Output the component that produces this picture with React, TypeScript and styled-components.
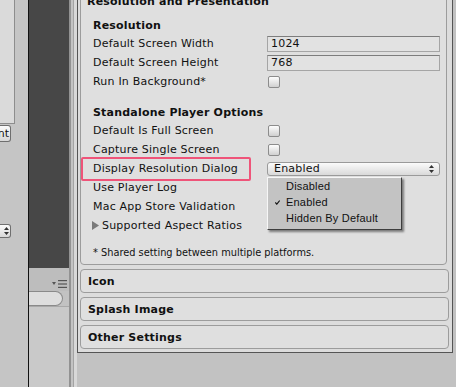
import React from 'react';
import styled, { createGlobalStyle } from 'styled-components';

const GlobalStyle = createGlobalStyle`
  html, body {
    margin: 0;
    padding: 0;
    background: #c2c2c2;
  }
  body {
    font-family: "DejaVu Sans", Verdana, sans-serif;
    font-size: 11px;
    letter-spacing: 0.2px;
    color: #111;
  }
`;

const Screen = styled.div`
  display: flex;
  width: 456px;
  height: 387px;
  overflow: hidden;
  background: #c2c2c2;
`;

// left-most strip (another window, clipped)
const LeftPane = styled.div`
  width: 28px;
  flex-shrink: 0;
  display: flex;
  flex-direction: column;
  background: #c5c5c5;
  border-right: 1px solid #111;
`;

const LeftBox = styled.div`
  width: 15px;
  height: 124px;
  box-sizing: border-box;
  background: #dadada;
  border-right: 1px solid #8d8d8d;
  border-bottom: 1px solid #8d8d8d;
`;

const EdgeButton = styled.div<{ $top: number; $height: number }>`
  margin-top: ${(p) => p.$top}px;
  width: 11px;
  height: ${(p) => p.$height}px;
  box-sizing: border-box;
  border: 1px solid #6f6f6f;
  border-left: none;
  border-radius: 0 3px 3px 0;
  background: linear-gradient(#fbfbfb, #d8d8d8);
  display: flex;
  align-items: center;
  justify-content: flex-end;
  overflow: hidden;
  padding-right: 1px;
  font-size: 11px;
  letter-spacing: 0;
  white-space: nowrap;
`;

const MidPane = styled.div`
  width: 40px;
  flex-shrink: 0;
  display: flex;
  flex-direction: column;
`;

const DarkArea = styled.div`
  height: 268px;
  flex-shrink: 0;
  background: #474747;
`;

const ToolStrip = styled.div`
  height: 23px;
  flex-shrink: 0;
  box-sizing: border-box;
  background: #bdbdbd;
  display: flex;
  justify-content: flex-end;
  align-items: flex-end;
  padding: 0 2px 3px 0;
`;

const SearchField = styled.div`
  width: 34px;
  height: 15px;
  flex-shrink: 0;
  box-sizing: border-box;
  border: 1px solid #8a8a8a;
  border-left: none;
  border-radius: 0 8px 8px 0;
  background: #dedede;
`;

const MidRest = styled.div`
  flex: 1;
  background: #c9c9c9;
  border-top: 1px solid #a9a9a9;
`;

const Splitter = styled.div`
  width: 8px;
  flex-shrink: 0;
  background: linear-gradient(
    to right,
    #929292 0 2px,
    #c3c3c3 2px 4px,
    #a3a3a3 4px 5px,
    #d8d8d8 5px 8px
  );
`;

const Inspector = styled.div`
  width: 376px;
  height: 353px;
  flex-shrink: 0;
  box-sizing: border-box;
  border: 1px solid #555;
  border-top: none;
  background: #dcdcdc;
  padding: 0 3px 3px 2px;
  display: flex;
  flex-direction: column;
`;

const SectionBox = styled.div`
  margin-top: -10px;
  margin-right: 2px;
  border: 1px solid #9c9c9c;
  border-radius: 4px;
  background: #dfdfdf;
  padding: 0 5px 3px 0;
`;

const FoldHeader = styled.div`
  height: 22px;
  line-height: 22px;
  padding-left: 6px;
  margin-bottom: 3px;
  font-weight: bold;
`;

const SubHeader = styled.div`
  height: 18px;
  line-height: 19px;
  padding-left: 12px;
  font-weight: bold;
`;

const Row = styled.div<{ $marked?: boolean }>`
  position: relative;
  height: 19px;
  display: flex;
  align-items: center;
  padding-left: 12px;

  ${(p) =>
    p.$marked &&
    `
    &::before {
      content: '';
      position: absolute;
      left: 0;
      top: -2px;
      width: 170px;
      height: 24px;
      box-sizing: border-box;
      border: 2px solid #ef5479;
      border-radius: 2px;
      pointer-events: none;
    }
  `}
`;

const Label = styled.div`
  width: 174px;
  flex-shrink: 0;
  white-space: nowrap;
  display: flex;
  align-items: center;
  gap: 3px;
`;

const FoldLabel = styled(Label)`
  margin-left: -1px;
`;

const Spacer = styled.div`
  height: 12px;
`;

const Note = styled.div`
  margin-top: 10px;
  height: 16px;
  line-height: 16px;
  padding-left: 12px;
  font-size: 9.8px;
  letter-spacing: 0;
  white-space: nowrap;
`;

const TextField = styled.div`
  width: 173px;
  height: 16px;
  box-sizing: border-box;
  border: 1px solid #a5a5a5;
  border-top-color: #7d7d7d;
  background: #e2e2e2;
  padding-left: 3px;
  line-height: 14px;
`;

const Checkbox = styled.div`
  width: 12px;
  height: 12px;
  margin-left: 1px;
  box-sizing: border-box;
  border: 1px solid #8c8c8c;
  border-radius: 2px;
  background: linear-gradient(#fdfdfd, #d0d0d0);
`;

const Dropdown = styled.div`
  position: relative;
  width: 173px;
  height: 14px;
  box-sizing: border-box;
  border: 1px solid #9a9a9a;
  border-radius: 3px;
  background: linear-gradient(#fbfbfb, #d9d9d9);
  display: flex;
  align-items: center;
  justify-content: space-between;
  padding: 0 5px 0 6px;
  line-height: 12px;
`;

const PopupMenu = styled.div`
  position: absolute;
  top: calc(100% + 2px);
  left: -1px;
  width: 135px;
  box-sizing: border-box;
  z-index: 10;
  background: #c3c3c3;
  border: 1px solid;
  border-color: #f6f6f6 #3d3d3d #3d3d3d #f6f6f6;
  box-shadow: 2px 2px 2px rgba(0, 0, 0, 0.45);
  padding: 0 0 3px;
  font-family: "Liberation Sans", Arial, sans-serif;
  font-size: 11px;
  letter-spacing: 0.2px;
  color: #111;
`;

const MenuItem = styled.div`
  position: relative;
  height: 16px;
  line-height: 16px;
  padding-left: 18px;
  white-space: nowrap;
`;

const CheckMark = styled.svg`
  position: absolute;
  left: 7px;
  top: 6px;
`;

const CollapsedBox = styled.div`
  margin-top: 4px;
  height: 24px;
  box-sizing: border-box;
  border: 1px solid #9c9c9c;
  border-radius: 4px;
  background: #dfdfdf;
  padding-left: 7px;
  line-height: 23px;
  font-weight: bold;
`;

const UpDown = () => (
  <svg width="5" height="8" viewBox="0 0 5 8">
    <path d="M2.5 0 L5 3 L0 3 Z M0 5 L5 5 L2.5 8 Z" fill="#333" />
  </svg>
);

const FoldArrow = () => (
  <svg width="7" height="9" viewBox="0 0 7 9">
    <path d="M0 0 L7 4.5 L0 9 Z" fill="#7a7a7a" />
  </svg>
);

const PaneMenuIcon = () => (
  <svg width="15" height="8" viewBox="0 0 15 8">
    <path d="M0 2 L4 2 L2 5 Z" fill="#555" />
    <rect x="6" y="0" width="9" height="1.2" fill="#555" />
    <rect x="6" y="3.4" width="9" height="1.2" fill="#555" />
    <rect x="6" y="6.8" width="9" height="1.2" fill="#555" />
  </svg>
);

const resolutionRows = [
  { label: 'Default Screen Width', value: '1024' },
  { label: 'Default Screen Height', value: '768' },
];

const App: React.FC = () => {
  return (
    <>
      <GlobalStyle />
      <Screen>
        <LeftPane>
          <LeftBox />
          <EdgeButton $top={1} $height={17}>nt</EdgeButton>
          <EdgeButton $top={82} $height={14}>
            <UpDown />
          </EdgeButton>
        </LeftPane>

        <MidPane>
          <DarkArea />
          <ToolStrip>
            <PaneMenuIcon />
          </ToolStrip>
          <SearchField />
          <MidRest />
        </MidPane>

        <Splitter />

        <Inspector>
          <SectionBox>
            <FoldHeader>Resolution and Presentation</FoldHeader>
            <SubHeader>Resolution</SubHeader>
            {resolutionRows.map((r) => (
              <Row key={r.label}>
                <Label>{r.label}</Label>
                <TextField>{r.value}</TextField>
              </Row>
            ))}
            <Row>
              <Label>Run In Background*</Label>
              <Checkbox />
            </Row>

            <Spacer />
            <SubHeader>Standalone Player Options</SubHeader>
            <Row>
              <Label>Default Is Full Screen</Label>
              <Checkbox />
            </Row>
            <Row>
              <Label>Capture Single Screen</Label>
              <Checkbox />
            </Row>
            <Row $marked>
              <Label>Display Resolution Dialog</Label>
              <Dropdown>
                <span>Enabled</span>
                <UpDown />
                <PopupMenu>
                  <MenuItem>Disabled</MenuItem>
                  <MenuItem>
                    <CheckMark width="5" height="5" viewBox="0 0 5 5">
                      <path d="M0.3 2.4 L1.8 4.2 L4.7 0.6" stroke="#111" strokeWidth="1.1" fill="none" />
                    </CheckMark>
                    Enabled
                  </MenuItem>
                  <MenuItem>Hidden By Default</MenuItem>
                </PopupMenu>
              </Dropdown>
            </Row>
            <Row>
              <Label>Use Player Log</Label>
            </Row>
            <Row>
              <Label>Mac App Store Validation</Label>
            </Row>
            <Row>
              <FoldLabel>
                <FoldArrow />
                Supported Aspect Ratios
              </FoldLabel>
            </Row>
            <Note>* Shared setting between multiple platforms.</Note>
          </SectionBox>

          <CollapsedBox>Icon</CollapsedBox>
          <CollapsedBox>Splash Image</CollapsedBox>
          <CollapsedBox>Other Settings</CollapsedBox>
        </Inspector>
      </Screen>
    </>
  );
};

export default App;
